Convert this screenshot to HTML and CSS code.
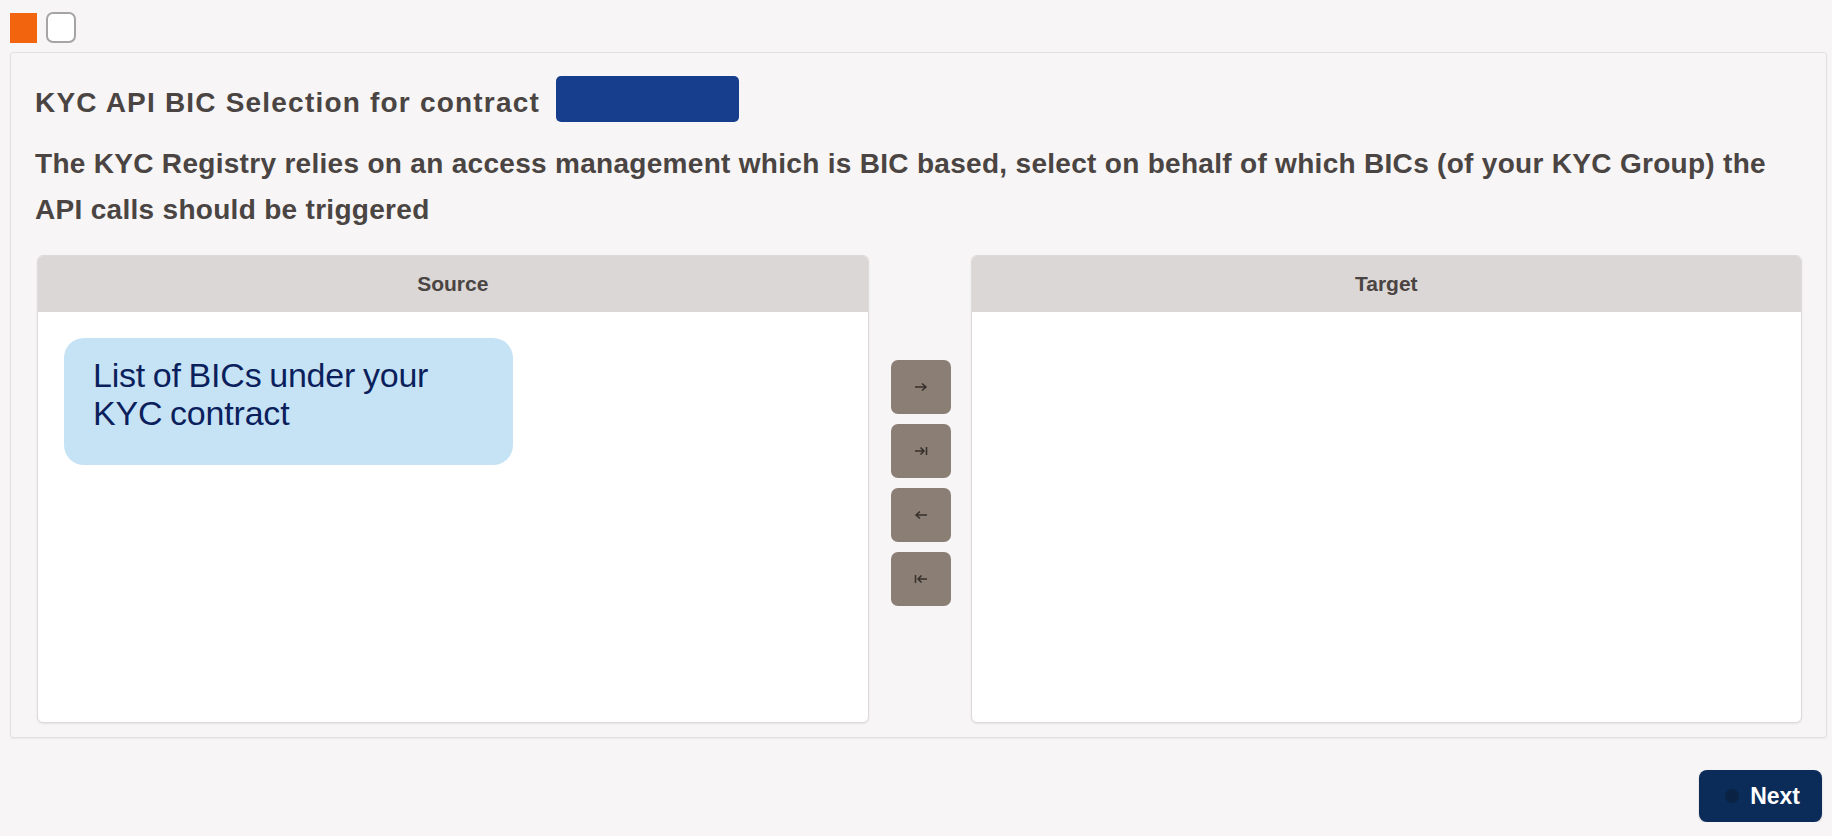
FILE: index.html
```html
<!DOCTYPE html>
<html>
<head>
<meta charset="utf-8">
<title>KYC API BIC Selection</title>
<link rel="stylesheet" href="styles.css">
</head>
<body>
<div class="topbar">
  <span class="step step-active"></span>
  <span class="step step-empty"></span>
</div>
<div class="panel">
  <div class="title-row">
    <h1 class="title">KYC API BIC Selection for contract</h1>
    <span class="contract-id"></span>
  </div>
  <p class="desc">The KYC Registry relies on an access management which is BIC based, select on behalf of which BICs (of your KYC Group) the API calls should be triggered</p>
  <div class="picklist">
    <div class="list">
      <div class="list-head">Source</div>
      <div class="list-body">
        <div class="callout">List of BICs under your KYC contract</div>
      </div>
    </div>
    <div class="controls">
      <button class="ctl" aria-label="Move right">
        <svg width="14" height="10" viewBox="0 0 14 10"><path d="M1 5h11M8 1.5l4 3.5-4 3.5" fill="none" stroke="#362f2b" stroke-width="1.5"/></svg>
      </button>
      <button class="ctl" aria-label="Move all right">
        <svg width="14" height="10" viewBox="0 0 14 10"><path d="M1 5h9M6.5 1.5l3.5 3.5-3.5 3.5M12.5 1v8" fill="none" stroke="#362f2b" stroke-width="1.5"/></svg>
      </button>
      <button class="ctl" aria-label="Move left">
        <svg width="14" height="10" viewBox="0 0 14 10"><path d="M13 5H2M6 1.5L2 5l4 3.5" fill="none" stroke="#362f2b" stroke-width="1.5"/></svg>
      </button>
      <button class="ctl" aria-label="Move all left">
        <svg width="14" height="10" viewBox="0 0 14 10"><path d="M13 5H4M7.5 1.5L4 5l3.5 3.5M1.5 1v8" fill="none" stroke="#362f2b" stroke-width="1.5"/></svg>
      </button>
    </div>
    <div class="list">
      <div class="list-head">Target</div>
      <div class="list-body"></div>
    </div>
  </div>
</div>
<div class="footer">
  <button class="next">
    <svg class="next-icon" width="16" height="16" viewBox="0 0 16 16"><circle cx="8" cy="8" r="7" fill="#0a2344"/></svg>
    <span>Next</span>
  </button>
</div>
</body>
</html>
```

FILE: styles.css
```css
* { box-sizing: border-box; }

html, body {
  margin: 0;
  padding: 0;
  background: #f7f5f5;
  font-family: "Liberation Sans", Arial, sans-serif;
}

.topbar {
  height: 52px;
  display: flex;
  align-items: flex-start;
  gap: 9px;
  padding: 12px 0 0 10px;
}

.step {
  display: block;
  width: 27px;
  height: 30px;
}

.step-active {
  margin-top: 1px;
  background: #f2640d;
}

.step-empty {
  width: 30px;
  height: 31px;
  background: #ffffff;
  border: 2px solid #a5a5a8;
  border-radius: 7px;
}

.panel {
  margin: 0 5px 0 10px;
  height: 686px;
  border: 1px solid #e1dfdf;
  border-radius: 3px;
  box-shadow: 0 1px 2px rgba(0, 0, 0, 0.05);
  padding: 23px 24px 14px 24px;
  display: flex;
  flex-direction: column;
}

.title-row {
  display: flex;
  align-items: center;
  gap: 16px;
  height: 46px;
}

.title {
  margin: 8px 0 0 0;
  font-size: 28px;
  letter-spacing: 1.2px;
  font-weight: bold;
  color: #4a4442;
  white-space: nowrap;
}

.contract-id {
  display: block;
  width: 183px;
  height: 46px;
  background: #173e8d;
  border-radius: 5px;
}

.desc {
  margin: 19px 0 22px 0;
  max-width: 1750px;
  font-size: 28px;
  letter-spacing: 0.3px;
  line-height: 46px;
  font-weight: bold;
  color: #4a4442;
}

.picklist {
  margin-left: 2px;
  display: grid;
  grid-template-columns: 1fr 102px 1fr;
  height: 468px;
}

.list {
  background: #ffffff;
  border: 1px solid #dcdada;
  border-radius: 6px;
  box-shadow: 0 1px 2px rgba(0, 0, 0, 0.08);
  overflow: hidden;
  display: flex;
  flex-direction: column;
}

.list-head {
  height: 56px;
  background: #dad7d6;
  display: flex;
  align-items: center;
  justify-content: center;
  font-size: 21px;
  font-weight: bold;
  color: #4a4442;
}

.list-body {
  flex: 1;
  padding: 26px 0 0 26px;
}

.callout {
  width: 449px;
  height: 127px;
  background: #c6e3f6;
  border-radius: 20px;
  padding: 18px 36px 0 29px;
  font-size: 34px;
  line-height: 38px;
  letter-spacing: -0.2px;
  word-spacing: -1.5px;
  color: #0b1f5c;
}

.controls {
  display: flex;
  flex-direction: column;
  align-items: center;
  gap: 10px;
  padding-top: 105px;
  padding-left: 3px;
}

.ctl {
  width: 60px;
  height: 54px;
  border: none;
  border-radius: 7px;
  background: #8a7e75;
  display: flex;
  align-items: center;
  justify-content: center;
  padding: 0;
}

.footer {
  display: flex;
  justify-content: flex-end;
  padding: 32px 10px 0 0;
}

.next {
  width: 123px;
  height: 52px;
  border: none;
  border-radius: 8px;
  background: #0b2c58;
  color: #ffffff;
  font-family: "Liberation Sans", Arial, sans-serif;
  font-size: 23px;
  font-weight: bold;
  display: flex;
  align-items: center;
  justify-content: flex-end;
  gap: 10px;
  padding: 0 22px 0 0;
  box-shadow: 0 1px 2px rgba(0, 0, 0, 0.2);
}

.next-icon {
  display: block;
}
```
